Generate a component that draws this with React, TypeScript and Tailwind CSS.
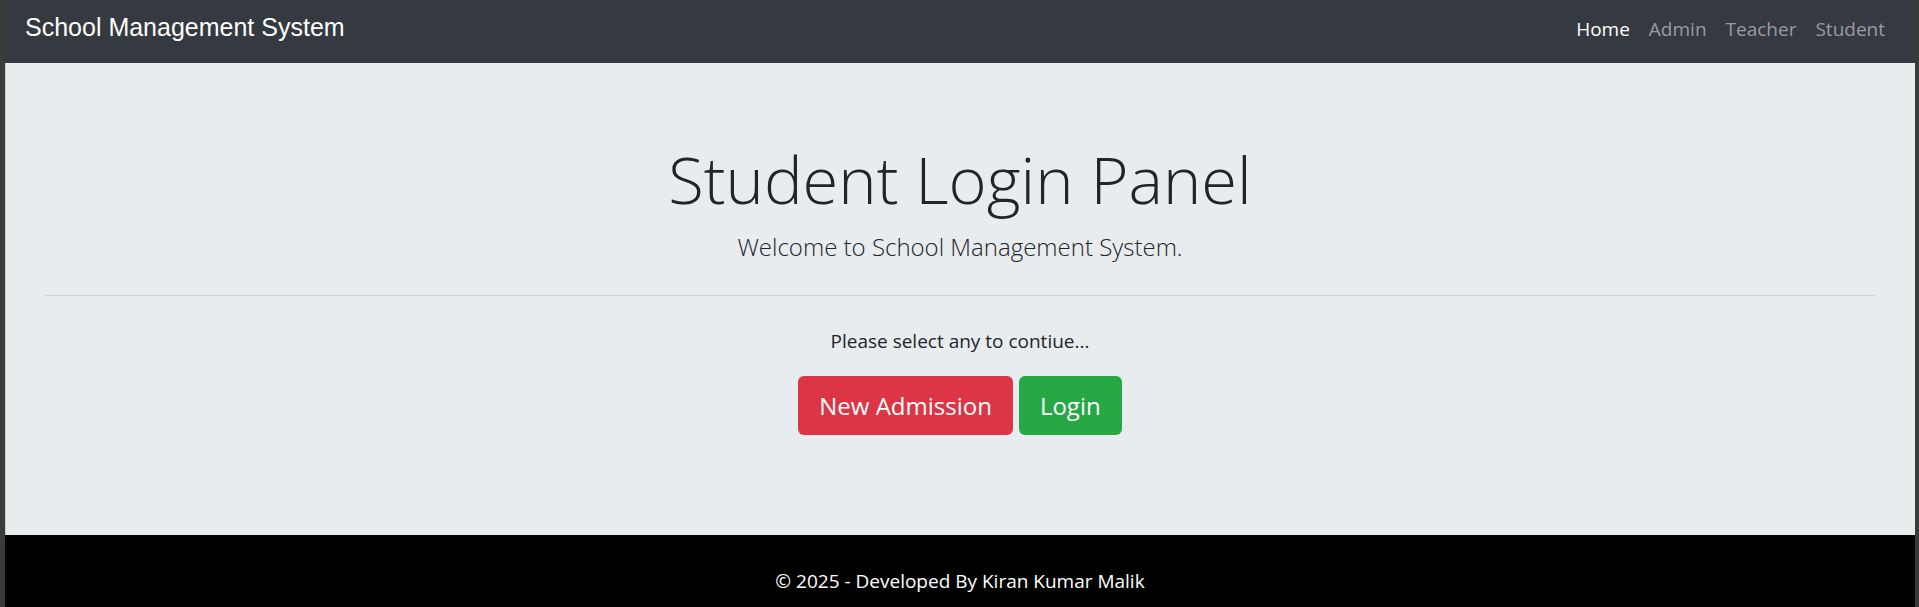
const links = [
  { label: "Home", active: true },
  { label: "Admin", active: false },
  { label: "Teacher", active: false },
  { label: "Student", active: false },
];

export default function App() {
  return (
    <div className="flex min-h-screen flex-col border-r-4 border-l-5 border-[#3b3b3a] bg-black font-['Open_Sans','Noto_Sans',sans-serif] text-[19px] leading-[30px] text-[#212529]">
      <header className="flex h-[63px] items-start justify-between bg-[#343a40] px-5 pr-[30px]">
        <a
          href="#home"
          className="pt-3 font-['Liberation_Sans',Arial,sans-serif] text-[25px] text-white"
        >
          School Management System
        </a>
        <nav className="flex gap-[19px] pt-[14px]">
          {links.map((link) => (
            <a
              key={link.label}
              href={"#" + link.label.toLowerCase()}
              className={link.active ? "text-white" : "text-[#999c9f]"}
            >
              {link.label}
            </a>
          ))}
        </nav>
      </header>

      <main className="border-l border-[#c9cccf] bg-[#e8ecef] pt-[74px] pr-10 pb-[100px] pl-[39px] text-center">
        <h1 className="mb-2 text-[65px] leading-[84px] font-light">Student Login Panel</h1>
        <p className="text-[24px] leading-[36px] font-light">Welcome to School Management System.</p>
        <hr className="my-[30px] border-t border-[#cdd1d4]" />
        <p className="mb-5">Please select any to contiue...</p>
        <div className="flex justify-center gap-[6px] text-[24px] leading-[37px] text-white">
          <button type="button" className="rounded-md bg-[#dc3545] px-[21px] py-[11px]">
            New Admission
          </button>
          <button type="button" className="rounded-md bg-[#28a745] px-[21px] py-[11px]">
            Login
          </button>
        </div>
      </main>

      <footer className="bg-black pt-[31px] text-center text-white">
        <p>© 2025 - Developed By Kiran Kumar Malik</p>
      </footer>
    </div>
  );
}
